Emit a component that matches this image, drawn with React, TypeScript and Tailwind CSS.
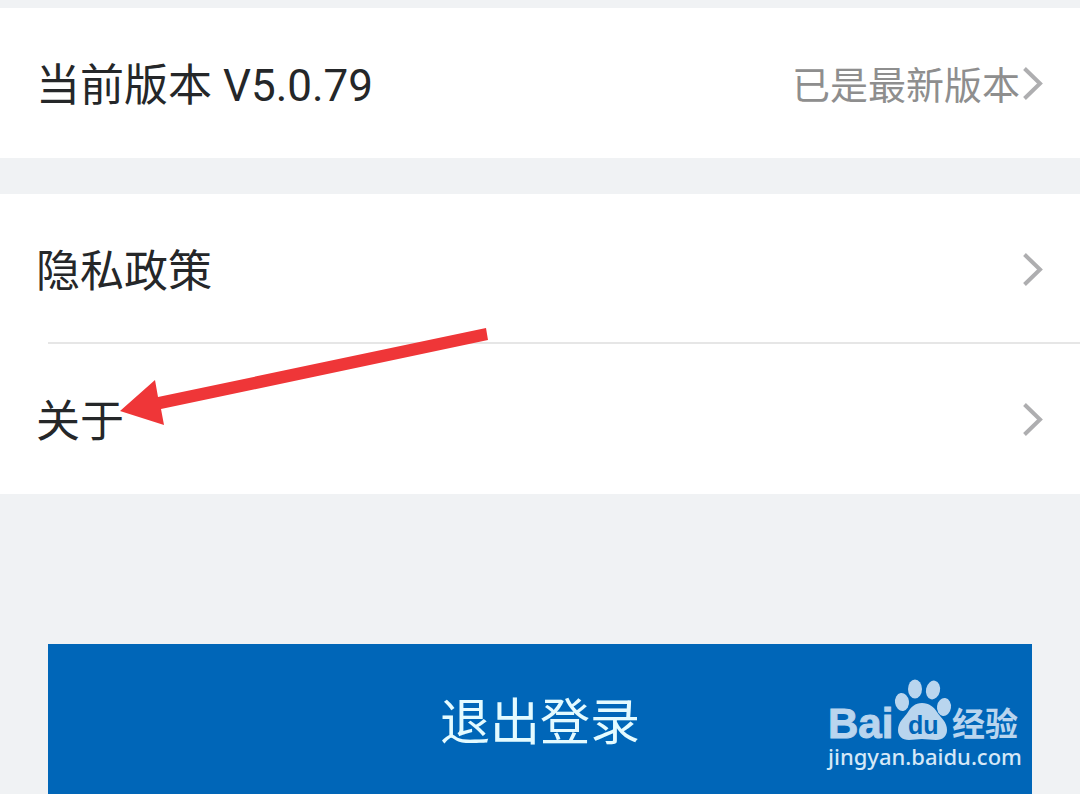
import type { ReactNode } from "react";

interface SettingRowProps {
  label: string;
  children?: ReactNode;
}

const Chevron = () => (
  <svg
    className="shrink-0 w-[22px] h-9"
    viewBox="0 0 22 36"
    fill="none"
    stroke="#aeaeb0"
    strokeWidth="4"
    aria-hidden="true"
  >
    <path d="M2.5 3.5 18 18.5 2.5 33.5" />
  </svg>
);

const SettingRow = ({ label, children }: SettingRowProps) => (
  <button
    type="button"
    className="flex w-full items-center justify-between bg-white h-[150px] px-9 text-left"
  >
    <span className="pt-1.5 text-[44px] leading-[64px] text-[#252729]">{label}</span>
    <span className="flex items-center text-[38px] leading-[56px] text-[#8e8e8e]">
      <span className="pt-1.5 pr-0.5">{children}</span>
      <Chevron />
    </span>
  </button>
);

const PointerArrow = () => (
  <svg
    className="absolute left-[120px] top-[134px] w-[370px] h-[100px] pointer-events-none"
    viewBox="0 0 370 100"
    aria-hidden="true"
  >
    <path
      d="M0 83 35 52 38 69 366 0 368 12 41 81 44 97Z"
      fill="#ef3638"
    />
  </svg>
);

const Watermark = () => (
  <svg
    className="absolute right-2 bottom-4 w-[200px] h-[104px] pointer-events-none"
    viewBox="0 0 200 104"
    fill="#b9d5ee"
    aria-label="Baidu 经验"
  >
    <text
      x="4"
      y="64"
      fontSize="42"
      fontWeight="700"
      fontFamily="Liberation Sans, sans-serif"
      stroke="#b9d5ee"
      strokeWidth="1"
    >
      Bai
    </text>
    {/* Paw */}
    <ellipse cx="78" cy="28" rx="7" ry="9" transform="rotate(-8 78 28)" />
    <ellipse cx="91" cy="15" rx="7" ry="9.5" />
    <ellipse cx="109" cy="16" rx="7" ry="9.5" transform="rotate(12 109 16)" />
    <ellipse cx="120" cy="33" rx="7" ry="9" transform="rotate(8 120 33)" />
    <path d="M98 29c-7 0-11 4-14 9-4 6-10 10-10 18 0 6 4 10 11 10 5 0 8-1 13-1s9 1 14 1c7 0 11-4 11-10 0-8-6-12-10-18-3-5-8-9-15-9Z" />
    <text
      x="84"
      y="60"
      fontSize="25"
      fontWeight="700"
      fontFamily="Liberation Sans, sans-serif"
      fill="#0066b8"
    >
      du
    </text>
    <text x="128" y="62" fontSize="33" fontWeight="700" fontFamily="Noto Sans CJK SC, sans-serif">
      经验
    </text>
    <text x="4" y="91" fontSize="22" fontWeight="500" fontFamily="Noto Sans, sans-serif" fill="#d5e8f7">
      jingyan.baidu.com
    </text>
  </svg>
);

export default function App() {
  return (
    <main className="min-h-screen bg-[#f0f2f4] pt-2 font-[Roboto,'Noto_Sans_CJK_SC',sans-serif]">
      <SettingRow label="当前版本 V5.0.79">已是最新版本</SettingRow>

      <section className="relative mt-9 bg-white">
        <SettingRow label="隐私政策" />
        <hr className="ml-12 -mt-0.5 border-0 h-0.5 bg-[#e6e6e6]" />
        <SettingRow label="关于" />
        <PointerArrow />
      </section>

      <div className="relative mx-12 mt-[150px]">
        <button
          type="button"
          className="block w-full h-[150px] pt-2 bg-[#0066b8] text-[50px] leading-[72px] text-[#e4fbff]"
        >
          退出登录
        </button>
        <Watermark />
      </div>
    </main>
  );
}
